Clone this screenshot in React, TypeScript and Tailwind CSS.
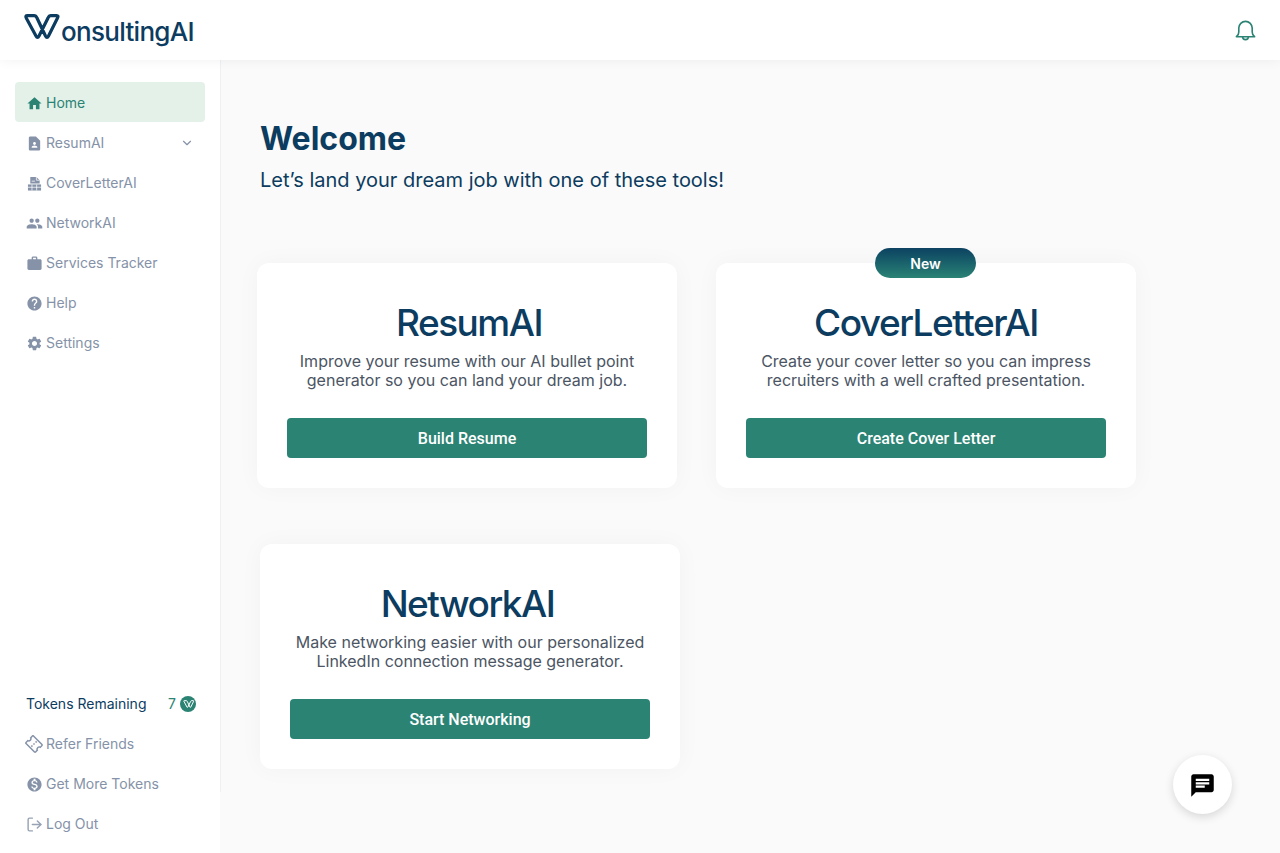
import type { ReactNode } from "react";
import { LuChevronDown, LuLogOut } from "react-icons/lu";
import {
  MdChat,
  MdContactPage,
  MdHelp,
  MdHome,
  MdMonetizationOn,
  MdOutlineConfirmationNumber,
  MdPeople,
  MdSettings,
  MdWork,
} from "react-icons/md";

const inter = "font-['Inter',sans-serif]";

// ribbon W: two offset Vs joined at the top into one closed loop
function WMark({ className }: { className?: string }) {
  return (
    <svg viewBox="0 0 42 36" fill="none" className={className} aria-hidden="true">
      <path
        d="M7 5.600H14Q16 5.600 17 8L25.500 26Q27 29 28.500 26L37.500 8Q38.900 5.600 36.500 5.600H31Q29 5.600 28 8L19 26Q17.500 29 16 26L6.500 8.500Q5 5.600 7 5.600Z"
        stroke="currentColor"
        strokeWidth="3.200"
        strokeLinejoin="round"
      />
    </svg>
  );
}

function BellIcon({ className }: { className?: string }) {
  return (
    <svg
      viewBox="0 0 24 24"
      fill="none"
      stroke="currentColor"
      strokeWidth="1.700"
      strokeLinejoin="round"
      className={className}
      aria-hidden="true"
    >
      <path d="M2.500 18.500c1.500-1 2.500-3 2.500-5V9.500a7 7 0 0 1 14 0v4c0 2 1 4 2.500 5z" />
      <path d="M9 18.500a3 3 0 0 0 6 0" />
    </svg>
  );
}

function CoverLetterIcon({ className }: { className?: string }) {
  return (
    <svg viewBox="0 0 16 16" fill="currentColor" className={className} aria-hidden="true">
      <path d="M3.500 1h6.500l3.500 3.500V8h-10z" />
      <path d="M10 1v3.500h3.500" stroke="white" strokeWidth="0.800" fill="none" />
      <path d="M5 5.500h3.500" stroke="white" strokeWidth="0.800" />
      <path d="M1 9h14v6.500H1z" />
      <path d="M5.300 9v6.500M10.300 9v6.500M1 12h14" stroke="white" strokeWidth="0.800" />
    </svg>
  );
}

function NavItem({
  icon,
  label,
  active,
  trailing,
}: {
  icon: ReactNode;
  label: string;
  active?: boolean;
  trailing?: ReactNode;
}) {
  return (
    <div
      className={`flex h-10 items-center gap-[5px] rounded px-3 text-sm ${
        active ? "bg-[#e4f1e9] text-[#2b8374]" : "text-[#8592a8]"
      }`}
    >
      <span className="flex w-[14px] shrink-0 justify-center">{icon}</span>
      <span>{label}</span>
      {trailing}
    </div>
  );
}

function ToolCard({
  title,
  lines,
  action,
  badge,
  className,
  titleClass,
}: {
  title: string;
  lines: string[];
  action: string;
  badge?: boolean;
  className?: string;
  titleClass?: string;
}) {
  return (
    <div
      className={`relative flex h-[225px] w-[420px] flex-col items-center rounded-xl bg-white px-[30px] pt-[37px] shadow-[0_0_24px_rgba(0,0,0,0.035)] ${className ?? ""}`}
    >
      {badge && (
        <div className="absolute -top-[15px] left-[159px] flex h-[30px] w-[101px] items-center justify-center rounded-full bg-gradient-to-b from-[#0d4261] to-[#2b8374] pt-px text-sm font-semibold text-white">
          New
        </div>
      )}
      <div
        className={`h-[46px] text-[37px] leading-[46px] font-medium tracking-[-1.5px] text-[#0c3c5f] ${titleClass ?? ""}`}
      >
        {title}
      </div>
      <p className="mt-[6px] text-center text-base leading-[19px] text-[#4b5563]">
        {lines[0]}
        <br />
        {lines[1]}
      </p>
      <button className="mt-7 h-10 w-full rounded bg-[#2b8374] pt-px font-['Roboto',sans-serif] text-base font-medium text-white">
        {action}
      </button>
    </div>
  );
}

export default function App() {
  const icon17 = "size-[17px] shrink-0";
  return (
    <div className={`flex h-[853px] flex-col overflow-hidden bg-[#fafafa] ${inter}`}>
      <header className="relative z-10 flex h-[60px] shrink-0 items-center justify-between bg-white pr-[23px] pl-5 shadow-[0_0_12px_rgba(0,0,0,0.06)]">
        <div className="flex items-center text-[#0c3c5f]">
          <WMark className="-mt-1 h-9 w-[42px]" />
          <span className="mt-[3px] -ml-px text-[26px] leading-none font-medium tracking-[-0.7px]">
            onsultingAI
          </span>
        </div>
        <BellIcon className="size-[23px] text-[#2b8374]" />
      </header>

      <div className="flex min-h-0 flex-1">
        <aside className="relative flex w-[220px] shrink-0 flex-col justify-between bg-white pt-[22px] pb-[9px]">
          <nav className="px-[15px] [&>div]:pt-[2px]">
            <NavItem active label="Home" icon={<MdHome className={icon17} />} />
            <NavItem
              label="ResumAI"
              icon={<MdContactPage className={icon17} />}
              trailing={<LuChevronDown className="-mr-px ml-auto size-[14px]" />}
            />
            <NavItem label="CoverLetterAI" icon={<CoverLetterIcon className="size-[15px] shrink-0" />} />
            <NavItem label="NetworkAI" icon={<MdPeople className={icon17} />} />
            <NavItem label="Services Tracker" icon={<MdWork className={icon17} />} />
            <NavItem label="Help" icon={<MdHelp className={icon17} />} />
            <NavItem label="Settings" icon={<MdSettings className={icon17} />} />
          </nav>
          <div className="px-[15px]">
            <div className="flex h-10 items-center pr-[9px] pl-[11px] text-sm text-[#0c3c5f]">
              <span>Tokens Remaining</span>
              <span className="ml-auto text-[#2b8374]">7</span>
              <span className="ml-1 flex size-4 items-center justify-center rounded-full bg-[#2b8374] text-white">
                <WMark className="size-[13px]" />
              </span>
            </div>
            <NavItem
              label="Refer Friends"
              icon={<MdOutlineConfirmationNumber className="size-[18px] shrink-0 rotate-45" />}
            />
            <NavItem label="Get More Tokens" icon={<MdMonetizationOn className={icon17} />} />
            <NavItem label="Log Out" icon={<LuLogOut className={`${icon17} -scale-x-100 rotate-180 opacity-85`} />} />
          </div>
          <div className="absolute top-0 right-[-1px] h-[732px] w-px bg-[#eef0f4]" />
        </aside>

        <main className="relative min-w-0 flex-1">
          <div className="pt-[59px] pl-10">
            <h1 className="text-[32px] leading-10 font-bold text-[#0c3c5f]">Welcome</h1>
            <p className="mt-[7px] text-xl leading-7 text-[#0c3c5f]">
              Let’s land your dream job with one of these tools!
            </p>
          </div>
          <div className="mt-[69px] ml-[37px] flex gap-[39px]">
            <ToolCard
              title="ResumAI"
              titleClass="ml-1"
              lines={[
                "Improve your resume with our AI bullet point",
                "generator so you can land your dream job.",
              ]}
              action="Build Resume"
            />
            <ToolCard
              badge
              title="CoverLetterAI"
              lines={[
                "Create your cover letter so you can impress",
                "recruiters with a well crafted presentation.",
              ]}
              action="Create Cover Letter"
            />
          </div>
          <ToolCard
            className="mt-14 ml-10"
            title="NetworkAI"
            titleClass="-ml-[5px]"
            lines={[
              "Make networking easier with our personalized",
              "LinkedIn connection message generator.",
            ]}
            action="Start Networking"
          />
          <button className="absolute right-[48px] bottom-[39px] flex size-[59px] items-center justify-center rounded-full bg-white pt-[2px] shadow-[0_3px_10px_rgba(0,0,0,0.14)]">
            <MdChat className="size-[27px] text-black" />
          </button>
        </main>
      </div>
    </div>
  );
}
